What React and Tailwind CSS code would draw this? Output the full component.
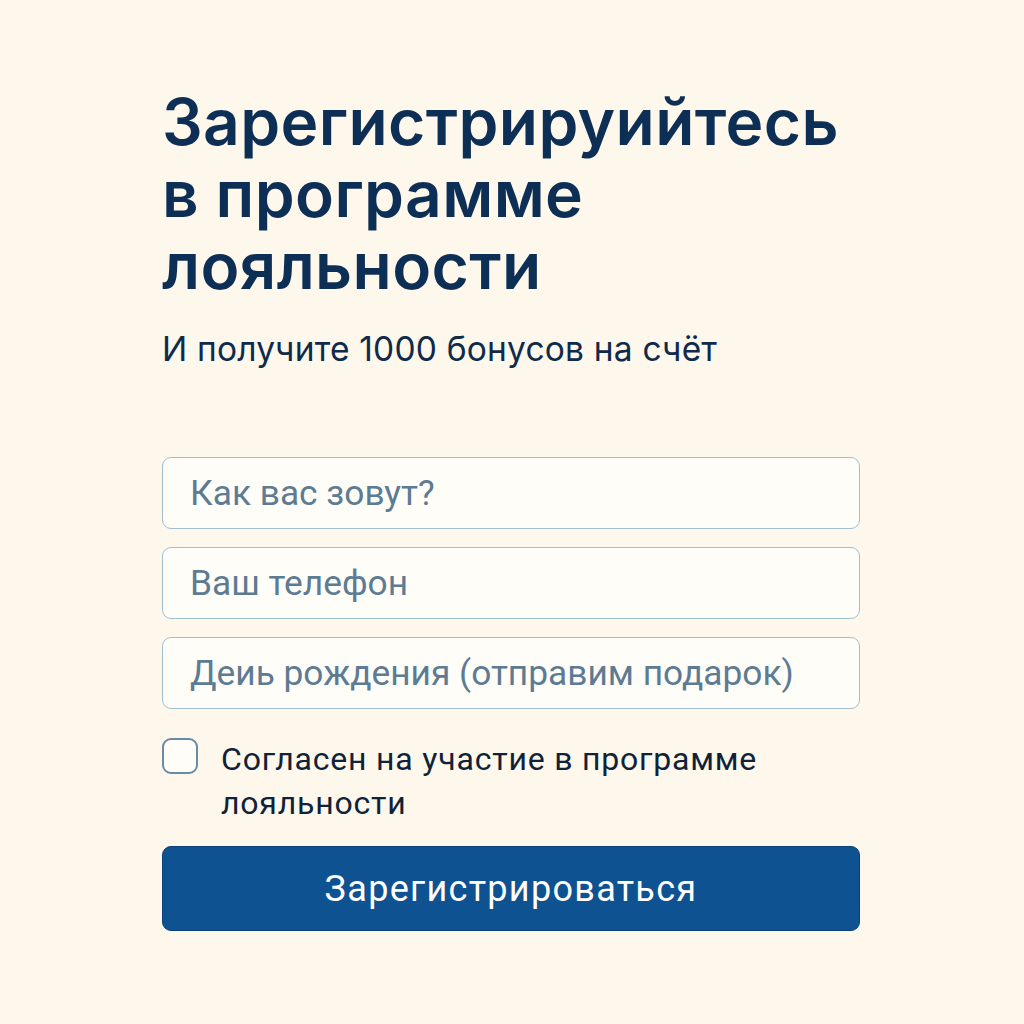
const fields = ["Как вас зовут?", "Ваш телефон", "Деиь рождения (отправим подарок)"];

export default function App() {
  return (
    <div className="min-h-screen w-full bg-[#fdf7ec] font-['Inter',sans-serif]">
      <div className="w-[698px] ml-[162px] pt-[86px]">
        <h1 className="text-[64px] leading-[72px] font-semibold tracking-[0.4px] text-[#0d2f55]">
          Зарегистрируийтесь
          <br />в программе
          <br />
          лояльности
        </h1>
        <p className="mt-[27px] text-[33.5px] leading-[40px] tracking-[0.2px] text-[#0f2a4a]">
          И получите 1000 бонусов на счёт
        </p>

        <form className="mt-[88px] flex flex-col gap-[18px]">
          {fields.map((f) => (
            <input
              key={f}
              placeholder={f}
              className="h-[72px] w-full rounded-[9px] border-[1.5px] border-[#9fbfd0] bg-[#fffdf8] px-[27px] text-[35.3px] text-[#5a7890] placeholder:text-[#5d7b92] outline-none font-['Roboto',sans-serif]"
            />
          ))}
        </form>

        <label className="mt-[28px] flex items-start gap-[23px]">
          <span className="mt-[1px] h-[36px] w-[36px] shrink-0 rounded-[9px] border-2 border-[#6a8aa5] bg-[#fffdf8]" />
          <span className="text-[32px] leading-[44px] tracking-[0.8px] text-[#0f2238] font-['Roboto',sans-serif]">
            Согласен на участие в программе
            <br />
            лояльности
          </span>
        </label>

        <button className="mt-[21px] h-[85px] w-full rounded-[9px] border border-[#0b3f78] bg-[#0f5291] text-[36px] tracking-[1.3px] text-white font-['Roboto',sans-serif]">
          Зарегистрироваться
        </button>
      </div>
    </div>
  );
}
